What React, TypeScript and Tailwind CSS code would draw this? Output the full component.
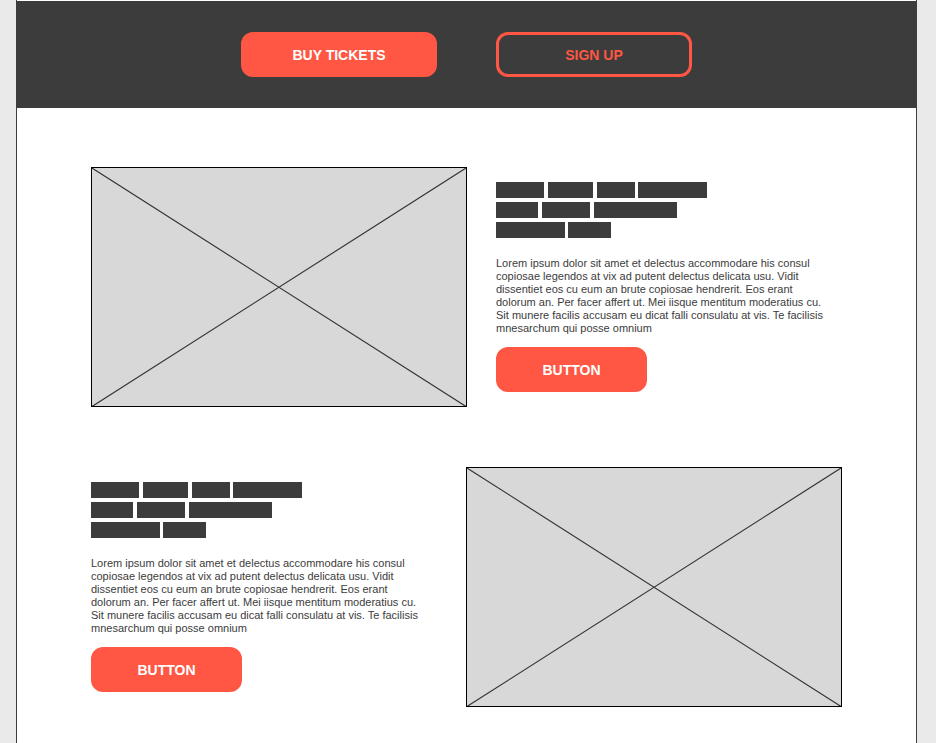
import clsx from "clsx";

const HEADING_LINES = [
  ["w-[48px] mr-1", "w-[45px] mr-1", "w-[38px] mr-[3px]", "w-[69px]"],
  ["w-[42px] mr-1", "w-[48px] mr-1", "w-[83px]"],
  ["w-[69px] mr-[3px]", "w-[43px]"],
];

const BODY =
  "Lorem ipsum dolor sit amet et delectus accommodare his consul copiosae legendos at vix ad putent delectus delicata usu. Vidit dissentiet eos cu eum an brute copiosae hendrerit. Eos erant dolorum an. Per facer affert ut. Mei iisque mentitum moderatius cu. Sit munere facilis accusam eu dicat falli consulatu at vis. Te facilisis mnesarchum qui posse omnium";

type ActionButtonProps = {
  label: string;
  wide?: boolean;
  outlined?: boolean;
};

function ActionButton({ label, wide, outlined }: ActionButtonProps) {
  return (
    <button
      type="button"
      className={clsx(
        "h-[45px] rounded-xl border-[3px] border-[#ff5744] text-sm font-bold",
        wide ? "w-[196px]" : "w-[151px]",
        outlined ? "text-[#ff5744]" : "bg-[#ff5744] text-white",
      )}
    >
      {label}
    </button>
  );
}

function ImagePlaceholder() {
  return (
    <div className="h-[240px] w-[376px] shrink-0 border border-black bg-[#d8d8d8]">
      <svg
        className="block h-full w-full"
        viewBox="0 0 374 238"
        preserveAspectRatio="none"
        fill="none"
        stroke="#333333"
        strokeWidth="1.15"
        aria-hidden="true"
      >
        <path d="M0 0 L374 238.5 M0 238.5 L374 0" />
      </svg>
    </div>
  );
}

function HeadingPlaceholder() {
  return (
    <div className="flex flex-col gap-1" aria-hidden="true">
      {HEADING_LINES.map((words, line) => (
        <div key={line} className="flex">
          {words.map((word, index) => (
            <span key={index} className={clsx("h-4 bg-[#3c3c3c]", word)} />
          ))}
        </div>
      ))}
    </div>
  );
}

function Feature({ reversed }: { reversed?: boolean }) {
  return (
    <section
      className={clsx(
        "flex items-center gap-[29px]",
        reversed && "flex-row-reverse",
      )}
    >
      <ImagePlaceholder />
      <div className="min-w-0 flex-1 pr-3">
        <HeadingPlaceholder />
        <p className="mt-[19px] mb-3 text-[11px] leading-[13px] text-[#3c3c3c]">
          {BODY}
        </p>
        <ActionButton label="BUTTON" />
      </div>
    </section>
  );
}

export default function App() {
  return (
    <div className="flex min-h-screen bg-[#eaeaea] pr-[19px] pl-4 font-['Liberation_Sans',Arial,sans-serif]">
      <div className="flex-1 border-x border-[#3c3c3c] bg-white pt-px">
        <header className="flex h-[107px] items-center justify-center gap-[59px] bg-[#3c3c3c]">
          <ActionButton label="BUY TICKETS" wide />
          <ActionButton label="SIGN UP" wide outlined />
        </header>
        <main className="flex flex-col gap-[60px] px-[74px] pt-[59px] pb-9">
          <Feature />
          <Feature reversed />
        </main>
      </div>
    </div>
  );
}
